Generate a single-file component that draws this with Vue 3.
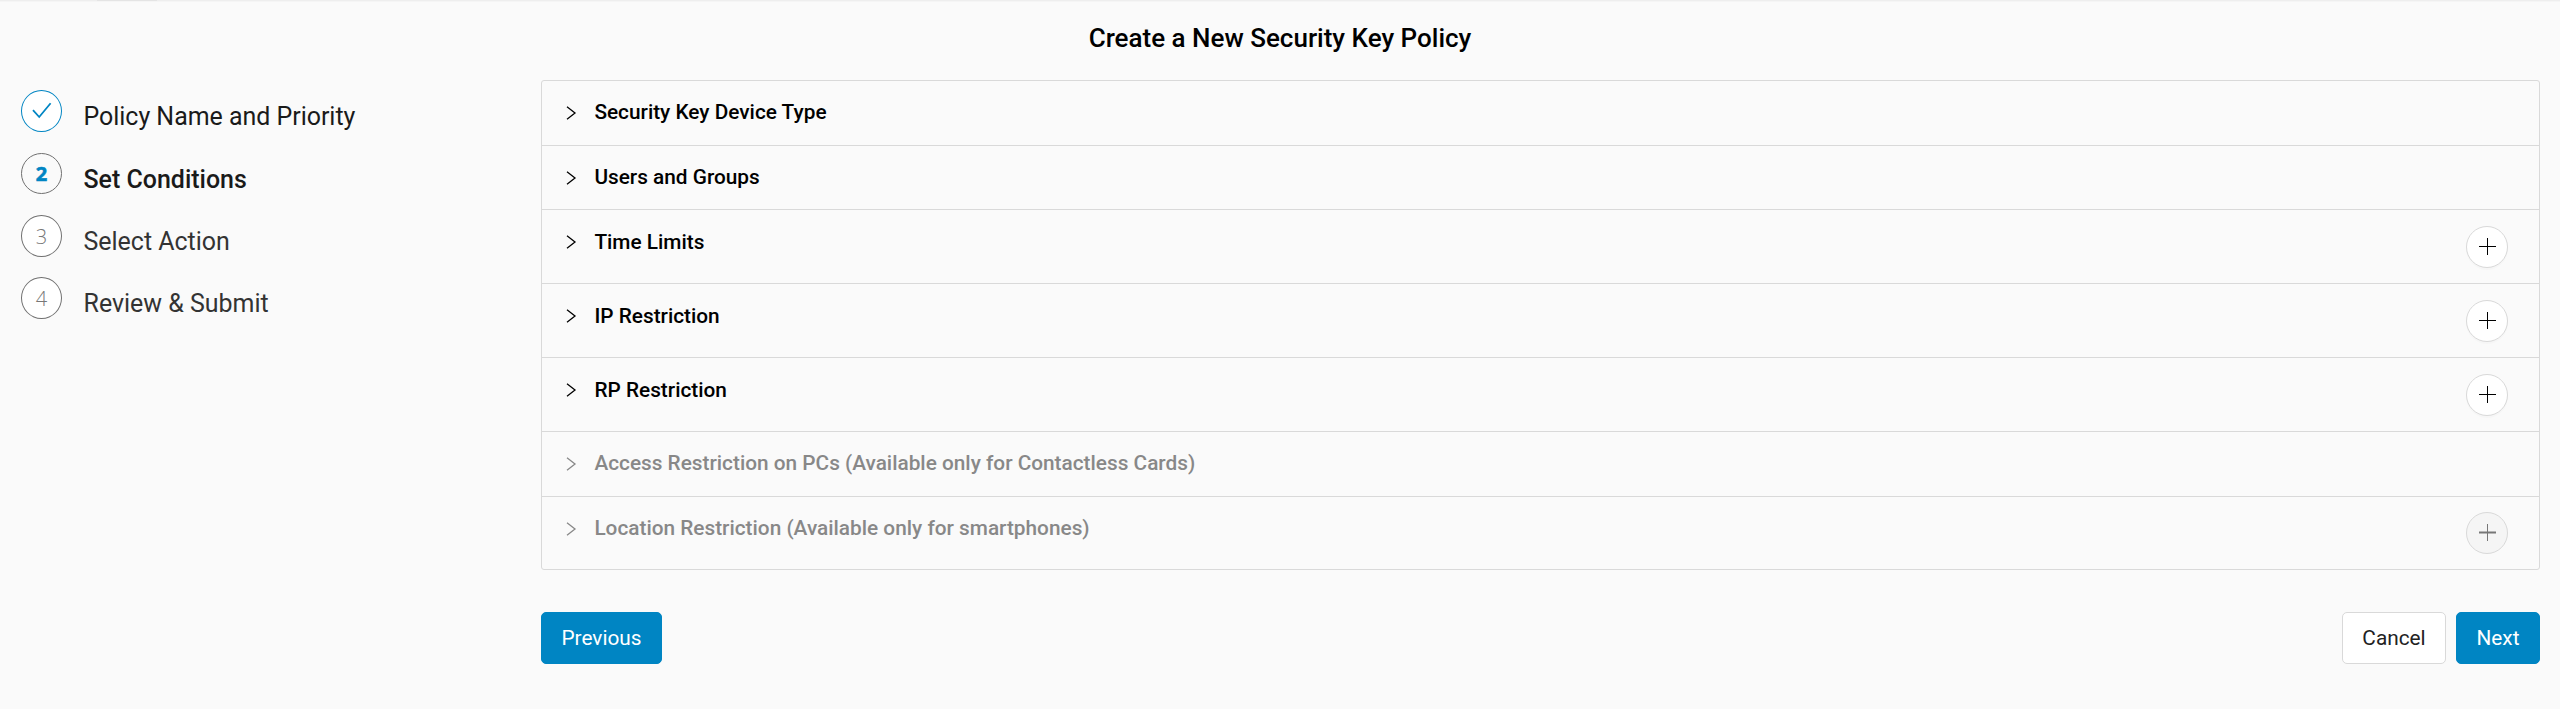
<script setup>
const steps = [
  { n: 1, label: 'Policy Name and Priority', state: 'done' },
  { n: 2, label: 'Set Conditions', state: 'active' },
  { n: 3, label: 'Select Action', state: 'todo' },
  { n: 4, label: 'Review & Submit', state: 'todo' },
]
const sections = [
  { title: 'Security Key Device Type' },
  { title: 'Users and Groups' },
  { title: 'Time Limits', add: true },
  { title: 'IP Restriction', add: true },
  { title: 'RP Restriction', add: true },
  { title: 'Access Restriction on PCs (Available only for Contactless Cards)', disabled: true },
  { title: 'Location Restriction (Available only for smartphones)', add: true, disabled: true },
]
</script>

<template>
  <div class="page">
    <div class="topline"><span></span></div>
    <h1 class="title">Create a New Security Key Policy</h1>
    <div class="body">
      <ol class="steps">
        <li v-for="s in steps" :key="s.n" class="step" :class="s.state">
          <span class="dot">
            <svg v-if="s.state === 'done'" width="20" height="18" viewBox="0 0 20 18">
              <path d="M1 8.2 7.2 15 18.6 1.2" fill="none" stroke="#0085c3" stroke-width="1.8" />
            </svg>
            <template v-else>{{ s.n }}</template>
          </span>
          <span class="label">{{ s.label }}</span>
        </li>
      </ol>
      <main class="main">
        <div class="panel">
          <div
            v-for="s in sections"
            :key="s.title"
            class="row"
            :class="{ disabled: s.disabled, tall: s.add && !s.disabled }"
          >
            <svg class="chev" width="11" height="14" viewBox="0 0 11 14">
              <path d="M1 .8 9 7 1 13.2" fill="none" stroke="currentColor" stroke-width="1.3" />
            </svg>
            <span class="name">{{ s.title }}</span>
            <button v-if="s.add" class="add" :disabled="s.disabled">
              <svg width="17" height="17" viewBox="0 0 17 17">
                <path class="h" d="M0 8.5H17" stroke="currentColor" />
                <path d="M8.5 0V17" stroke="currentColor" />
              </svg>
            </button>
          </div>
        </div>
        <div class="actions">
          <button class="btn primary prev">Previous</button>
          <button class="btn cancel">Cancel</button>
          <button class="btn primary next">Next</button>
        </div>
      </main>
    </div>
  </div>
</template>

<style>
body {
  margin: 0;
  background: #fafafa;
}
</style>

<style scoped>
.page {
  box-sizing: border-box;
  width: 2560px;
  height: 709px;
  overflow: hidden;
  background: #fafafa;
  font-family: Roboto, sans-serif;
  color: #000;
}
.topline {
  height: 2px;
  padding-left: 97px;
  background: linear-gradient(#eee 50%, #f5f5f5 50%);
}
.topline span {
  display: block;
  width: 60px;
  height: 1px;
  background: #e4e4e4;
}
.title {
  margin: 20px 0 0;
  height: 58px;
  line-height: 32px;
  font-size: 26px;
  font-weight: 500;
  text-align: center;
}
.body {
  display: flex;
}
.steps {
  box-sizing: border-box;
  width: 541px;
  margin: 0;
  padding: 10px 0 0 21px;
  list-style: none;
}
.step {
  display: flex;
  align-items: flex-start;
  gap: 21.5px;
  height: 62px;
}
.step.done {
  height: 63px;
}
.dot {
  box-sizing: border-box;
  display: flex;
  align-items: center;
  justify-content: center;
  width: 41px;
  height: 42px;
  border: 1px solid #707070;
  border-radius: 50%;
  background: #fff;
  color: #777;
  font: 300 20px "Open Sans", sans-serif;
}
.done .dot {
  border-color: #0085c3;
}
.active .dot {
  height: 41px;
  color: #0085c3;
  font-weight: 700;
  -webkit-text-stroke: 0.6px #0085c3;
  background: #fafafa;
}
.label {
  padding-top: 11px;
  line-height: 32px;
  font-size: 24.96px;
  color: #333;
}
.done .label {
  color: #1a1a1a;
  letter-spacing: -0.02px;
}
.active .label {
  color: #1a1a1a;
  font-weight: 500;
}
.main {
  width: 1999px;
}
.panel {
  display: grid;
  grid-template-rows: 65px 64px 74px 74px 74px 65px 72px;
  border: 1px solid #d9d9d9;
  border-radius: 3px;
}
.row {
  display: flex;
  align-items: flex-start;
  padding: 0 31px 0 24px;
  border-bottom: 1px solid #d9d9d9;
}
.row:last-child {
  border-bottom: 0;
}
.row.disabled {
  color: #888;
}
.chev {
  margin-top: 25px;
}
.name {
  flex: 1;
  margin: 15px 0 0 17.4px;
  line-height: 32px;
  font-size: 20.8px;
  font-weight: 500;
}
.tall .name {
  margin-top: 16px;
}
.add {
  box-sizing: border-box;
  display: flex;
  align-items: center;
  justify-content: center;
  width: 42px;
  height: 42px;
  margin-top: 16px;
  padding: 0 0 1px 1px;
  border: 1px solid #d9d9d9;
  border-radius: 50%;
  background: #fff;
  color: #000;
  box-shadow: 0 2px 0 rgba(0, 0, 0, 0.016);
}
.add:disabled {
  margin-top: 15px;
  background: #f5f5f5;
  color: #777;
  box-shadow: none;
}
.add:disabled .h {
  stroke-width: 2;
}
.actions {
  display: flex;
  gap: 10px;
  margin-top: 42px;
}
.btn {
  box-sizing: border-box;
  height: 52px;
  padding: 0;
  border: 1px solid #d9d9d9;
  border-radius: 5px;
  background: #fff;
  color: #222;
  font: 400 20.8px Roboto, sans-serif;
}
.primary {
  border-color: #0085c3;
  background: #0085c3;
  color: #fff;
}
.prev {
  width: 121px;
  margin-right: auto;
}
.cancel {
  width: 104px;
}
.next {
  width: 84px;
}
</style>
